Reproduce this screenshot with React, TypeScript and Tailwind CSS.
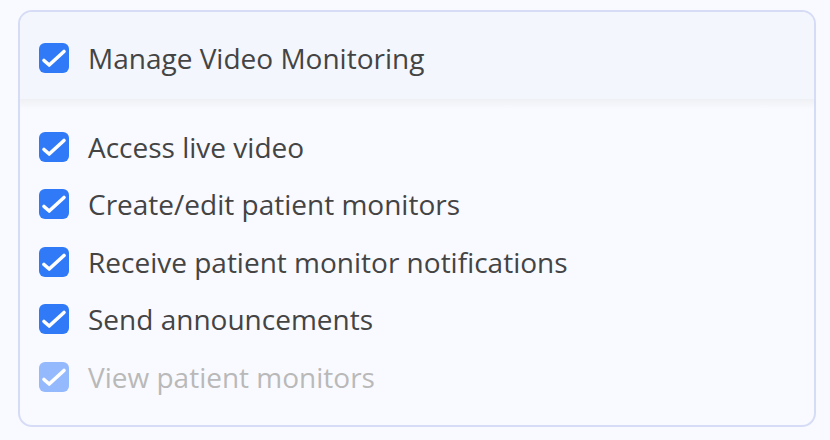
import React from "react";

function Check({ disabled }: { disabled?: boolean }) {
  return (
    <span
      className={
        "flex h-[30px] w-[30px] shrink-0 items-center justify-center rounded-[6px] " +
        (disabled ? "bg-[#95b9fd]" : "bg-[#3079f7]")
      }
    >
      <svg width="30" height="30" viewBox="0 0 30 30" fill="none">
        <path d="M5 17.5 L10.2 22 L25 8.5" stroke="white" strokeWidth="3.6" strokeLinecap="round" strokeLinejoin="round" />
      </svg>
    </span>
  );
}

const items = [
  "Access live video",
  "Create/edit patient monitors",
  "Receive patient monitor notifications",
  "Send announcements",
];

export default function App() {
  return (
    <div
      className="min-h-[440px] w-[830px] bg-[#f9faff] pt-[10px] pl-[18px] pr-[14px]"
      style={{ fontFamily: "'Open Sans', 'Noto Sans', sans-serif" }}
    >
      <div className="h-[417px] overflow-hidden rounded-[14px] border-2 border-[#d6dcf5] bg-[#f9faff]">
        <div className="flex h-[87px] items-center gap-[19px] bg-[#f3f6fd] pl-[19px] pt-[4px]">
          <Check />
          <span className="text-[28px] leading-none text-[#444444]">Manage Video Monitoring</span>
        </div>
        <div className="h-[10px] bg-gradient-to-b from-[#eff0f4] to-[#f9faff]" />
        <div className="pt-[9px]">
          {items.map((t) => (
            <div key={t} className="flex h-[57.5px] items-center gap-[19px] pl-[19px]">
              <Check />
              <span className="text-[28px] leading-none text-[#444444]">{t}</span>
            </div>
          ))}
          <div className="flex h-[57.5px] items-center gap-[19px] pl-[19px]">
            <Check disabled />
            <span className="text-[28px] leading-none text-[#b9b9b9]">View patient monitors</span>
          </div>
        </div>
      </div>
    </div>
  );
}
